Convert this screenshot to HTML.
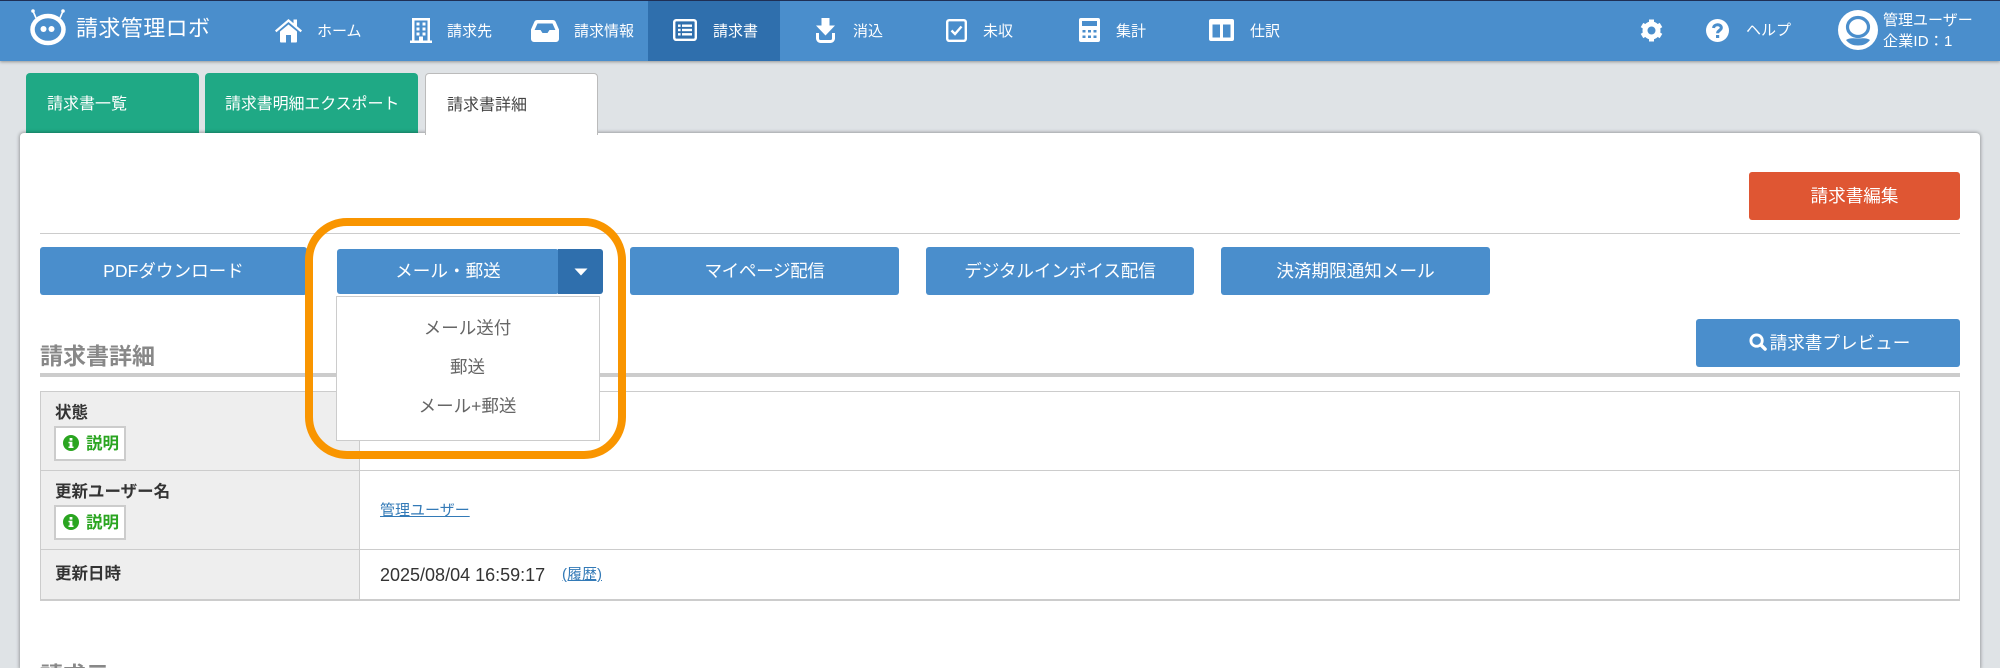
<!DOCTYPE html>
<html lang="ja">
<head>
<meta charset="utf-8">
<title>請求書詳細</title>
<style>
html,body{margin:0;padding:0;width:2000px;height:668px;overflow:hidden;background:#dfe3e6;font-family:"Liberation Sans","Noto Sans CJK JP",sans-serif;}
*{box-sizing:border-box;}
#wrap{position:relative;width:2000px;height:668px;overflow:hidden;background:#dfe3e6;}
.a{position:absolute;white-space:nowrap;}
#hd{position:absolute;left:0;top:0;width:2000px;height:61px;background:#4a8ecc;border-top:1px solid #1f2f55;box-shadow:0 1px 3px rgba(0,0,0,.35);}
.n{position:absolute;color:#fff;font-size:15px;line-height:20px;top:22px;white-space:nowrap;}
svg{position:absolute;overflow:visible;}
.tab{position:absolute;top:73px;height:62px;border-radius:4px 4px 0 0;font-size:16px;line-height:20px;padding-top:22px;white-space:nowrap;}
.g{background:#1fa985;color:#fff;}
#panel{position:absolute;left:20px;top:133px;width:1960px;height:535px;background:#fff;border-radius:4px 4px 0 0;box-shadow:0 0 3px 1px rgba(0,0,0,.3);}
.btn{position:absolute;background:#4a8ecc;color:#fff;font-size:17.6px;line-height:49px;height:48px;text-align:center;border-radius:3px;white-space:nowrap;}
.c{position:absolute;font-size:16.5px;line-height:22px;color:#333;white-space:nowrap;}
.exp{position:absolute;left:54px;width:72px;height:35px;background:#fff;border:2px solid #ccc;color:#2aa520;font-weight:bold;font-size:16.5px;line-height:33px;padding-left:30px;white-space:nowrap;}
.l{position:absolute;background:#ccc;}
.m{position:absolute;left:336px;width:263px;text-align:center;font-size:17.5px;line-height:24px;color:#666;white-space:nowrap;}
a{color:#337ab7;text-decoration:underline;}
</style>
</head>
<body>
<div id="wrap">
<div id="hd"></div>

<!-- logo -->
<svg style="left:29px;top:8px" width="38" height="37" viewBox="0 0 38 37">
<g stroke="#fff" fill="none"><path d="M4 3 L7 10" stroke-width="1.6"/><path d="M34 3 L31 10" stroke-width="1.6"/>
<ellipse cx="19" cy="21.5" rx="15.5" ry="13.5" stroke-width="4.5"/></g>
<circle cx="4" cy="3" r="1.8" fill="#fff"/><circle cx="34" cy="3" r="1.8" fill="#fff"/>
<circle cx="14.5" cy="21" r="3" fill="#fff"/><circle cx="22.5" cy="21" r="3" fill="#fff"/>
</svg>
<div class="a" style="left:76px;top:15px;color:#fff;font-size:22px;line-height:28px;font-weight:400;letter-spacing:.4px">請求管理ロボ</div>

<!-- active nav -->
<div class="a" style="left:648px;top:1px;width:132px;height:60px;background:#2f6fad"></div>

<!-- home -->
<svg style="left:275px;top:18px" width="27" height="25" viewBox="0 0 27 25"><path fill="#fff" d="M5 13.5 L13.5 6.5 L22 13.5 V23.5 a1 1 0 0 1-1 1 H16 V17 H11 V24.5 H6 a1 1 0 0 1-1-1Z"/><path fill="#fff" d="M0 12.5 L13.5 1 L18.5 5.2 V1.5 H22 V8.2 L27 12.5 L25.6 14.2 L13.5 4 L1.4 14.2Z"/></svg>
<div class="n" style="left:317px">ホーム</div>
<!-- building -->
<svg style="left:410px;top:18px" width="22" height="25" viewBox="0 0 22 25"><path fill="#fff" fill-rule="evenodd" d="M2 0 H20 V22.5 H22 V25 H0 V22.5 H2Z M4.5 2.5 V22.5 H9 V18.5 H13 V22.5 H17.5 V2.5Z"/><g fill="#fff"><rect x="6.5" y="4.5" width="3" height="3"/><rect x="12.5" y="4.5" width="3" height="3"/><rect x="6.5" y="9.5" width="3" height="3"/><rect x="12.5" y="9.5" width="3" height="3"/><rect x="6.5" y="14.5" width="3" height="3"/><rect x="12.5" y="14.5" width="3" height="3"/></g></svg>
<div class="n" style="left:447px">請求先</div>
<!-- inbox -->
<svg style="left:531px;top:20px" width="28" height="22" viewBox="0 0 28 22"><path fill="#fff" fill-rule="evenodd" d="M6 0 H22 a3 3 0 0 1 2.5 1.5 L28 9.5 V19 a3 3 0 0 1-3 3 H3 a3 3 0 0 1-3-3 V9.5 L3.5 1.5 A3 3 0 0 1 6 0Z M6.5 3.5 L3.6 10 H9.5 L11.5 13 H16.5 L18.5 10 H24.4 L21.5 3.5Z"/></svg>
<div class="n" style="left:574px">請求情報</div>
<!-- list -->
<svg style="left:673px;top:19px" width="24" height="22" viewBox="0 0 24 22"><rect x="1.2" y="1.2" width="21.6" height="19.6" rx="2" fill="none" stroke="#fff" stroke-width="2.4"/><g fill="#fff"><rect x="5" y="5.5" width="2.6" height="2.4"/><rect x="9" y="5.5" width="10" height="2.4"/><rect x="5" y="9.8" width="2.6" height="2.4"/><rect x="9" y="9.8" width="10" height="2.4"/><rect x="5" y="14.1" width="2.6" height="2.4"/><rect x="9" y="14.1" width="10" height="2.4"/></g></svg>
<div class="n" style="left:713px">請求書</div>
<!-- download -->
<svg style="left:816px;top:18px" width="19" height="25" viewBox="0 0 19 25"><path fill="#fff" d="M5.5 0 H13.5 V7.5 H19 L9.5 17.5 L0 7.5 H5.5Z"/><path fill="none" stroke="#fff" stroke-width="3" d="M1.5 15 V20.5 a3 3 0 0 0 3 3 H14.5 a3 3 0 0 0 3-3 V15"/></svg>
<div class="n" style="left:853px">消込</div>
<!-- check -->
<svg style="left:946px;top:19px" width="22" height="23" viewBox="0 0 22 23"><rect x="1.2" y="1.2" width="18.6" height="20.6" rx="2" fill="none" stroke="#fff" stroke-width="2.4"/><path fill="none" stroke="#fff" stroke-width="2.4" d="M5.5 11.5 L9 15 L15.5 7.5"/></svg>
<div class="n" style="left:983px">未収</div>
<!-- calc -->
<svg style="left:1079px;top:18px" width="21" height="24" viewBox="0 0 21 24"><path fill="#fff" fill-rule="evenodd" d="M2 0 H19 a2 2 0 0 1 2 2 V22 a2 2 0 0 1-2 2 H2 a2 2 0 0 1-2-2 V2 a2 2 0 0 1 2-2Z M3 3 V8 H18 V3Z M3.5 12 V14.5 H6.5 V12Z M9 12 V14.5 H12 V12Z M14.5 12 V14.5 H17.5 V12Z M3.5 17.5 V20 H6.5 V17.5Z M9 17.5 V20 H12 V17.5Z M14.5 17.5 V20 H17.5 V17.5Z"/></svg>
<div class="n" style="left:1116px">集計</div>
<!-- columns -->
<svg style="left:1209px;top:19px" width="25" height="22" viewBox="0 0 25 22"><path fill="#fff" fill-rule="evenodd" d="M2 0 H23 a2 2 0 0 1 2 2 V20 a2 2 0 0 1-2 2 H2 a2 2 0 0 1-2-2 V2 a2 2 0 0 1 2-2Z M3.5 5.5 V18.5 H11 V5.5Z M14 5.5 V18.5 H21.5 V5.5Z"/></svg>
<div class="n" style="left:1250px">仕訳</div>

<!-- gear -->
<svg style="left:1640px;top:19px" width="23" height="23" viewBox="0 0 23 23"><circle cx="11.5" cy="11.5" r="6.5" fill="none" stroke="#fff" stroke-width="5"/><g stroke="#fff" stroke-width="5"><path d="M11.5 0.5 V4"/><path d="M11.5 19 V22.5"/><path d="M2 6 L5 7.8"/><path d="M18 15.2 L21 17"/><path d="M2 17 L5 15.2"/><path d="M18 7.8 L21 6"/></g></svg>
<!-- help -->
<svg style="left:1706px;top:19px" width="23" height="23" viewBox="0 0 23 23"><circle cx="11.5" cy="11.5" r="11.5" fill="#fff"/><path fill="none" stroke="#4a8ecc" stroke-width="3" d="M7.6 9 C7.8 4.8 15.3 4.6 15.3 8.8 C15.3 11.4 11.6 11.4 11.6 14.2"/><rect x="10" y="16" width="3.2" height="3" fill="#4a8ecc"/></svg>
<div class="n" style="left:1746px;top:21px">ヘルプ</div>
<!-- avatar -->
<svg style="left:1838px;top:10px" width="40" height="40" viewBox="0 0 40 40"><circle cx="20" cy="20" r="20" fill="#fff"/><ellipse cx="20" cy="17" rx="10.5" ry="9.5" fill="none" stroke="#4a8ecc" stroke-width="3.2"/><path fill="#4a8ecc" d="M8 30 C12 27.5 15 28.5 20 28.5 C25 28.5 28 27.5 32 30 C29 34 25 35.5 20 35.5 C15 35.5 11 34 8 30Z"/></svg>
<div class="n" style="left:1883px;top:11px">管理ユーザー</div>
<div class="n" style="left:1883px;top:32px;letter-spacing:.2px">企業ID：1</div>

<!-- tabs -->
<div class="tab g" style="left:26px;width:173px;padding-left:21px">請求書一覧</div>
<div class="tab g" style="left:205px;width:213px;padding-left:20px;letter-spacing:-.12px">請求書明細エクスポート</div>

<div id="panel"></div>
<div class="tab" style="left:425px;width:173px;padding-left:21px;background:#fff;color:#444;border:1px solid #bbb;border-bottom:0;height:62px;z-index:2;padding-top:22px;">請求書詳細</div>

<div class="btn" style="left:1749px;top:172px;width:211px;background:#df5633">請求書編集</div>
<div class="l" style="left:40px;top:233px;width:1920px;height:1px"></div>

<div class="btn" style="left:40px;top:247px;width:267px">PDFダウンロード</div>
<div class="btn" style="left:337px;top:249px;width:222px;height:45px;line-height:45px">メール・郵送</div>
<div class="btn" style="left:558px;top:249px;width:45px;height:45px;background:#2f6fad;border-radius:0 3px 3px 0"></div>
<svg style="left:574px;top:268px" width="14" height="8" viewBox="0 0 14 8"><path fill="#fff" d="M0.5 0.5 H13.5 L7 7.5Z"/></svg>
<div class="btn" style="left:630px;top:247px;width:269px;letter-spacing:-.4px">マイページ配信</div>
<div class="btn" style="left:926px;top:247px;width:268px;letter-spacing:-.1px">デジタルインボイス配信</div>
<div class="btn" style="left:1221px;top:247px;width:269px">決済期限通知メール</div>

<div class="a" style="left:40px;top:340px;font-size:23px;line-height:32px;font-weight:bold;color:#888">請求書詳細</div>
<div class="a" style="left:40px;top:373px;width:1920px;height:4px;background:#ccc"></div>
<div class="btn" style="left:1696px;top:319px;width:264px">
<span style="padding-left:24px">請求書プレビュー</span></div>
<svg style="left:1749px;top:333px" width="18" height="18" viewBox="0 0 19 19"><circle cx="8" cy="8" r="6" fill="none" stroke="#fff" stroke-width="3"/><path stroke="#fff" stroke-width="3.6" stroke-linecap="round" d="M12.8 12.8 L17 17"/></svg>

<!-- table -->
<div class="a" style="left:40px;top:391px;width:1920px;height:210px;border:2px solid #ccc;border-width:1px 1px 2px 1px"></div>
<div class="a" style="left:41px;top:392px;width:318px;height:207px;background:#eee"></div>
<div class="l" style="left:359px;top:391px;width:1px;height:209px"></div>
<div class="l" style="left:40px;top:470px;width:1920px;height:1px"></div>
<div class="l" style="left:40px;top:549px;width:1920px;height:1px"></div>

<div class="c" style="left:55px;top:402px;font-weight:bold">状態</div>
<div class="exp" style="top:426px">説明</div>
<svg style="left:63px;top:435px" width="16" height="16" viewBox="0 0 16 16"><circle cx="8" cy="8" r="8" fill="#2aa520"/><rect x="6.6" y="3" width="2.8" height="2.6" fill="#fff"/><path fill="#fff" d="M5.5 6.8 H9.4 V11.5 H10.5 V13 H5.5 V11.5 H6.6 V8.2 H5.5Z"/></svg>

<div class="c" style="left:55px;top:481px;font-weight:bold">更新ユーザー名</div>
<div class="exp" style="top:505px">説明</div>
<svg style="left:63px;top:514px" width="16" height="16" viewBox="0 0 16 16"><circle cx="8" cy="8" r="8" fill="#2aa520"/><rect x="6.6" y="3" width="2.8" height="2.6" fill="#fff"/><path fill="#fff" d="M5.5 6.8 H9.4 V11.5 H10.5 V13 H5.5 V11.5 H6.6 V8.2 H5.5Z"/></svg>
<a class="c" style="left:380px;top:500px;color:#337ab7;font-size:15px">管理ユーザー</a>

<div class="c" style="left:55px;top:563px;font-weight:bold">更新日時</div>
<div class="c" style="left:380px;top:564px;font-size:18px">2025/08/04 16:59:17</div>
<a class="c" style="left:562px;top:564px;color:#337ab7;font-size:15px">(履歴)</a>

<div class="a" style="left:40px;top:659px;font-size:23px;line-height:32px;font-weight:bold;color:#888">請求元</div>

<!-- dropdown -->
<div class="a" style="left:336px;top:296px;width:264px;height:145px;background:#fff;border:1px solid #ccc"></div>
<div class="m" style="top:316px">メール送付</div>
<div class="m" style="top:355px">郵送</div>
<div class="m" style="top:394px">メール+郵送</div>

<!-- highlight -->
<div class="a" style="left:305px;top:218px;width:321px;height:241px;border:8px solid #f99500;border-radius:42px"></div>
</div>
</body>
</html>
